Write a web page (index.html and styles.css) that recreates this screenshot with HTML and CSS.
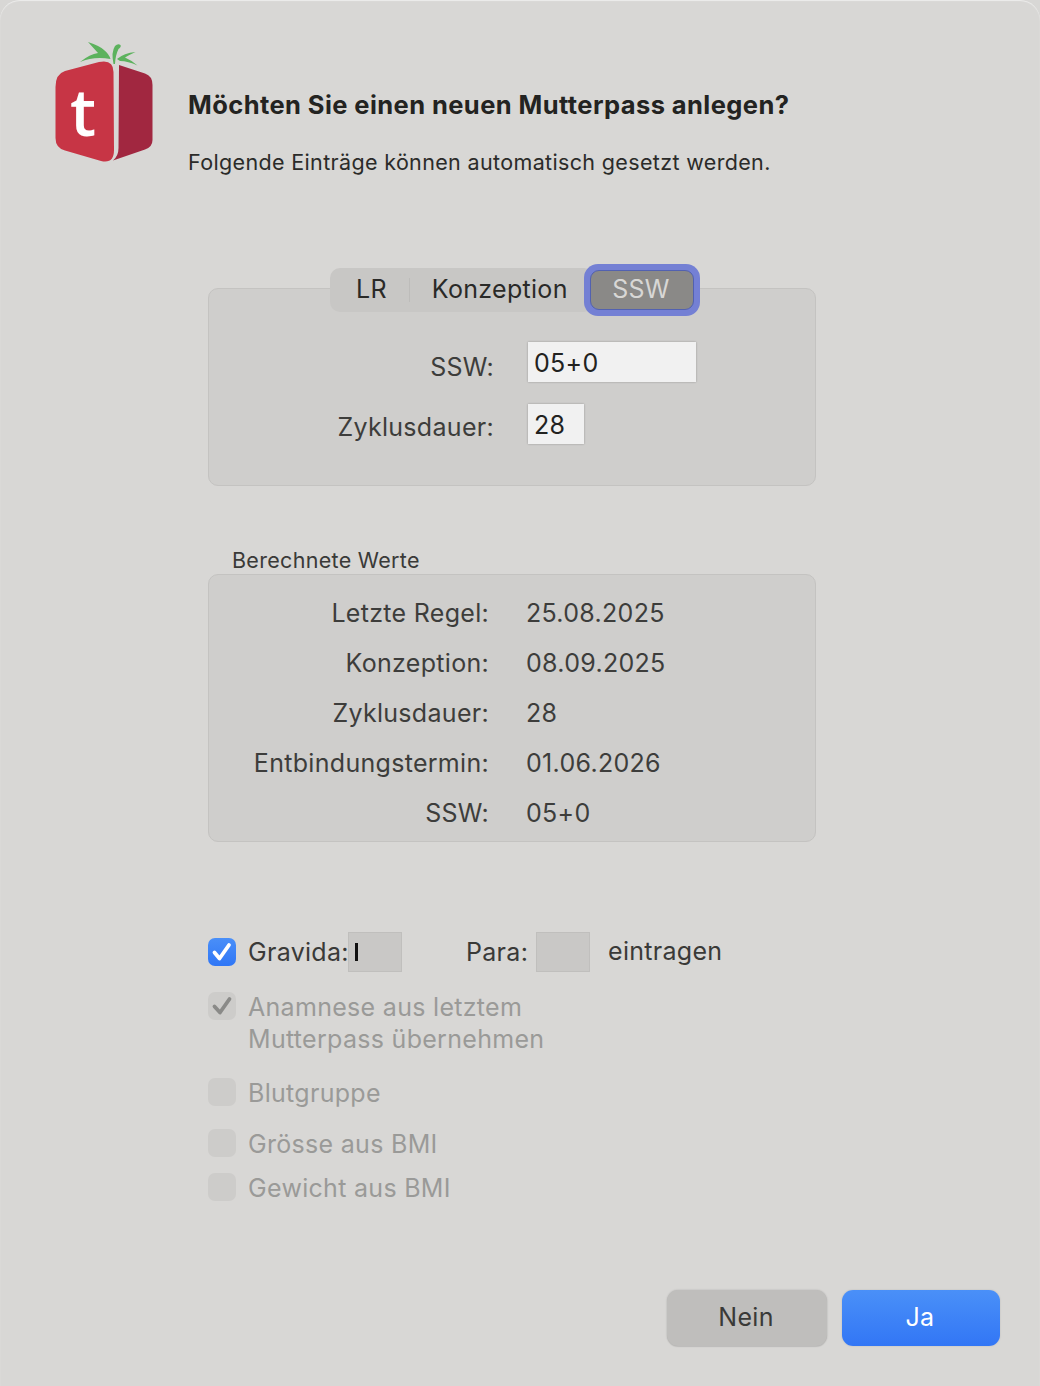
FILE: index.html
```html
<!DOCTYPE html>
<html lang="de">
<head>
<meta charset="utf-8">
<title>Mutterpass anlegen</title>
<link rel="stylesheet" href="styles.css">
</head>
<body>
<main class="dialog">
  <header class="head">
    <svg class="logo" viewBox="55 40 100 125" width="100" height="125" aria-hidden="true">
      <path fill="#5cb25d" d="M80 62 Q90 54 98 53 L88 42 Q100 46 104 50 Q109 54 110.500 59 Q94 56 80 62Z"/>
      <path fill="#5cb25d" d="M113.500 64 Q111 52 115 46 Q118 43 120.500 45 Q121.500 47 118.500 49 Q115.500 55 115 64Z"/>
      <path fill="#5cb25d" d="M117 59 Q124 53 135.500 52 Q129 55 125 57.500 Q131 60 137.500 65.500 Q128 61 120 61Z"/>
      <path fill="#c73545" d="M55.500 87 Q55.500 74 65 71 L99 62 Q113.500 59 113.500 72 L114 150 Q114 164 101 161 L65 150.500 Q55.500 148 55.500 138Z"/>
      <path fill="#a12740" d="M119 65 L145 73.500 Q152.500 76 152.500 85 L152.500 140 Q152.500 147 145 149.500 L113 160.500 Q118.500 156 118.500 148 L119 65Z"/>
      <text class="logo-t" x="70" y="136">t</text>
    </svg>
    <div class="head-text">
      <h1 class="title">Möchten Sie einen neuen Mutterpass anlegen?</h1>
      <p class="subtitle">Folgende Einträge können automatisch gesetzt werden.</p>
    </div>
  </header>

  <section class="panel panel-input">
    <div class="tabs">
      <div class="segments">
        <span class="seg seg-lr">LR</span>
        <span class="divider"></span>
        <span class="seg seg-konz">Konzeption</span>
      </div>
      <span class="seg-active"><span class="seg-inner">SSW</span></span>
    </div>
    <div class="input-grid">
      <span class="field-label label-low">SSW:</span>
      <span class="field field-wide">05+0</span>
      <span class="field-label label-high">Zyklusdauer:</span>
      <span class="field field-small">28</span>
    </div>
  </section>

  <h2 class="group-title">Berechnete Werte</h2>
  <section class="panel panel-values">
    <span class="v-label">Letzte Regel:</span><span class="v-value">25.08.2025</span>
    <span class="v-label">Konzeption:</span><span class="v-value">08.09.2025</span>
    <span class="v-label">Zyklusdauer:</span><span class="v-value">28</span>
    <span class="v-label">Entbindungstermin:</span><span class="v-value">01.06.2026</span>
    <span class="v-label">SSW:</span><span class="v-value">05+0</span>
  </section>

  <section class="options">
    <div class="row-gravida">
      <span class="check check-on">
        <svg viewBox="0 0 28 28" width="28" height="28" aria-hidden="true"><path d="M6.500 14.500 L11.500 20.500 L21 7" fill="none" stroke="#fff" stroke-width="3.800" stroke-linecap="round" stroke-linejoin="round"/></svg>
      </span>
      <span class="opt-label gravida-label">Gravida:</span>
      <span class="mini-field"><span class="caret"></span></span>
      <span class="opt-label para-label">Para:</span>
      <span class="mini-field"></span>
      <span class="opt-label eintragen">eintragen</span>
    </div>
    <div class="row row-anamnese">
      <span class="check check-dis">
        <svg viewBox="0 0 28 28" width="28" height="28" aria-hidden="true"><path d="M6.500 14.500 L12 20.500 L21.500 7" fill="none" stroke="#8a8a88" stroke-width="3.800" stroke-linecap="round" stroke-linejoin="round"/></svg>
      </span>
      <span class="opt-label disabled two-line">Anamnese aus letztem<br>Mutterpass übernehmen</span>
    </div>
    <div class="row row-single row-blut"><span class="check check-dis"></span><span class="opt-label disabled">Blutgruppe</span></div>
    <div class="row row-single row-groesse"><span class="check check-dis"></span><span class="opt-label disabled">Grösse aus BMI</span></div>
    <div class="row row-single row-gewicht"><span class="check check-dis"></span><span class="opt-label disabled">Gewicht aus BMI</span></div>
  </section>

  <footer class="actions">
    <button class="btn btn-no" type="button">Nein</button>
    <button class="btn btn-yes" type="button">Ja</button>
  </footer>
</main>
</body>
</html>
```
FILE: styles.css
```css
* { box-sizing: border-box; }
html, body { margin: 0; padding: 0; }
body {
  background: #d8d7d5;
  font-family: Inter, "Liberation Sans", sans-serif;
  letter-spacing: .3px;
  color: #3a3a38;
}
.dialog {
  width: 1040px;
  height: 1386px;
  display: flex;
  flex-direction: column;
  overflow: hidden;
  border-radius: 20px 20px 0 0;
  box-shadow: inset 0 1px 1px rgba(255, 255, 255, .55);
  background: #d8d7d5;
}

/* Header */
.head {
  display: flex;
  padding: 40px 0 0 55px;
  height: 288px;
  flex: none;
}
.logo { flex: none; display: block; }
.logo-t { font-family: "Open Sans", sans-serif; font-weight: 600; font-size: 66px; fill: #fff; letter-spacing: 0; }
.head-text { margin-left: 33px; padding-top: 49px; }
.title {
  margin: 0;
  font-size: 25.500px;
  line-height: 32px;
  font-weight: 700;
  color: #232321;
  letter-spacing: .42px;
  white-space: nowrap;
}
.subtitle {
  margin: 27px 0 0;
  font-size: 21.500px;
  line-height: 28px;
  font-weight: 400;
  color: #2b2b29;
  letter-spacing: .35px;
  white-space: nowrap;
}

/* Panels */
.panel {
  flex: none;
  width: 608px;
  margin-left: 208px;
  background: #cfcecc;
  border: 1px solid #c4c3c1;
  border-radius: 10px;
}
.panel-input { height: 198px; }

/* Segmented control */
.tabs {
  display: flex;
  align-items: center;
  margin: -25px 0 0 121px;
  height: 52px;
  font-size: 25px;
}
.segments {
  display: flex;
  align-items: center;
  width: 264px;
  height: 44px;
  margin-right: -10px;
  padding-bottom: 2px;
  background: #c8c7c5;
  border-radius: 10px;
  color: #2a2a28;
}
.seg-lr { margin-left: 26px; }
.divider { width: 1px; height: 24px; background: #bdbcba; margin: 2px 22px 0 22px; }
.seg-active {
  position: relative;
  width: 116px;
  height: 52px;
  padding: 6px;
  background: #7480d4;
  border-radius: 14px;
}
.seg-inner {
  display: flex;
  align-items: center;
  justify-content: center;
  height: 40px;
  padding: 0 2px 2px 0;
  background: #8a8987;
  border: 1px solid #5261b0;
  border-radius: 9px;
  color: #d8d7d5;
}

/* SSW inputs */
.input-grid {
  display: grid;
  grid-template-columns: 286px auto;
  column-gap: 33px;
  row-gap: 22px;
  justify-content: start;
  margin-top: 26px;
  font-size: 25px;
}
.field-label { color: #3d3d3b; text-align: right; align-self: center; padding-right: 1px; }
.label-low { padding-top: 10px; }
.label-high { padding-top: 6px; }
.field {
  display: flex;
  align-items: center;
  height: 40px;
  padding: 2px 0 0 6px;
  background: #f1f1f1;
  color: #222220;
  box-shadow: 0 0 2px rgba(0, 0, 0, .28);
}
.field-wide { width: 168px; }
.field-small { width: 56px; }

/* Calculated */
.group-title {
  flex: none;
  margin: 60px 0 0 232px;
  height: 28px;
  font-size: 21.500px;
  line-height: 28px;
  font-weight: 400;
  color: #3a3a38;
}
.panel-values {
  height: 268px;
  display: grid;
  grid-template-columns: 280px auto;
  column-gap: 37px;
  grid-auto-rows: 50px;
  align-content: start;
  justify-content: start;
  padding-top: 13px;
  font-size: 25px;
  color: #3d3d3b;
}
.v-label { text-align: right; line-height: 50px; }
.v-value { line-height: 50px; }

/* Options */
.options { flex: none; margin: 90px 0 0 208px; font-size: 25px; }
.row-gravida { display: flex; align-items: center; height: 40px; }
.check {
  flex: none;
  display: block;
  width: 28px;
  height: 28px;
  border-radius: 7px;
}
.check svg { display: block; }
.check-on { background: linear-gradient(#4a8ff8, #2f76f6); }
.check-dis { background: #cdccca; }
.opt-label { margin-left: 12px; white-space: nowrap; color: #3a3a38; }
.opt-label.disabled { color: #9a9a98; }
.gravida-label { width: 100px; }
.mini-field {
  flex: none;
  display: flex;
  align-items: center;
  width: 54px;
  height: 40px;
  padding-left: 6px;
  background: #c9c8c6;
  border: 1px solid #c0bfbd;
}
.caret { width: 3px; height: 18px; background: #111; }
.para-label { margin-left: 64px; width: 70px; }
.eintragen { margin-left: 18px; margin-top: -2px; }
.row { display: flex; align-items: flex-start; }
.row-single { height: 28px; }
.row .opt-label { line-height: 30px; }
.row .two-line { line-height: 32px; margin-top: -1px; }
.row-anamnese { margin-top: 20px; }
.row-blut { margin-top: 23px; }
.row-groesse { margin-top: 23px; }
.row-gewicht { margin-top: 16px; }

/* Buttons */
.actions {
  flex: none;
  display: flex;
  margin: 89px 0 0 667px;
  gap: 15px;
}
.btn {
  height: 56px;
  border: 0;
  border-radius: 11px;
  font-family: inherit;
  font-size: 25px;
  letter-spacing: .3px;
  padding: 0 2px 2px 0;
}
.btn-no {
  width: 160px;
  background: #bfbebc;
  color: #3a3a38;
  box-shadow: 0 0 2px rgba(0, 0, 0, .18), 0 1px 1px rgba(0, 0, 0, .08);
}
.btn-yes {
  width: 158px;
  background: linear-gradient(#4a90f8, #3276f5);
  color: #fff;
  box-shadow: 0 0 2px rgba(0, 0, 0, .14);
}
```
